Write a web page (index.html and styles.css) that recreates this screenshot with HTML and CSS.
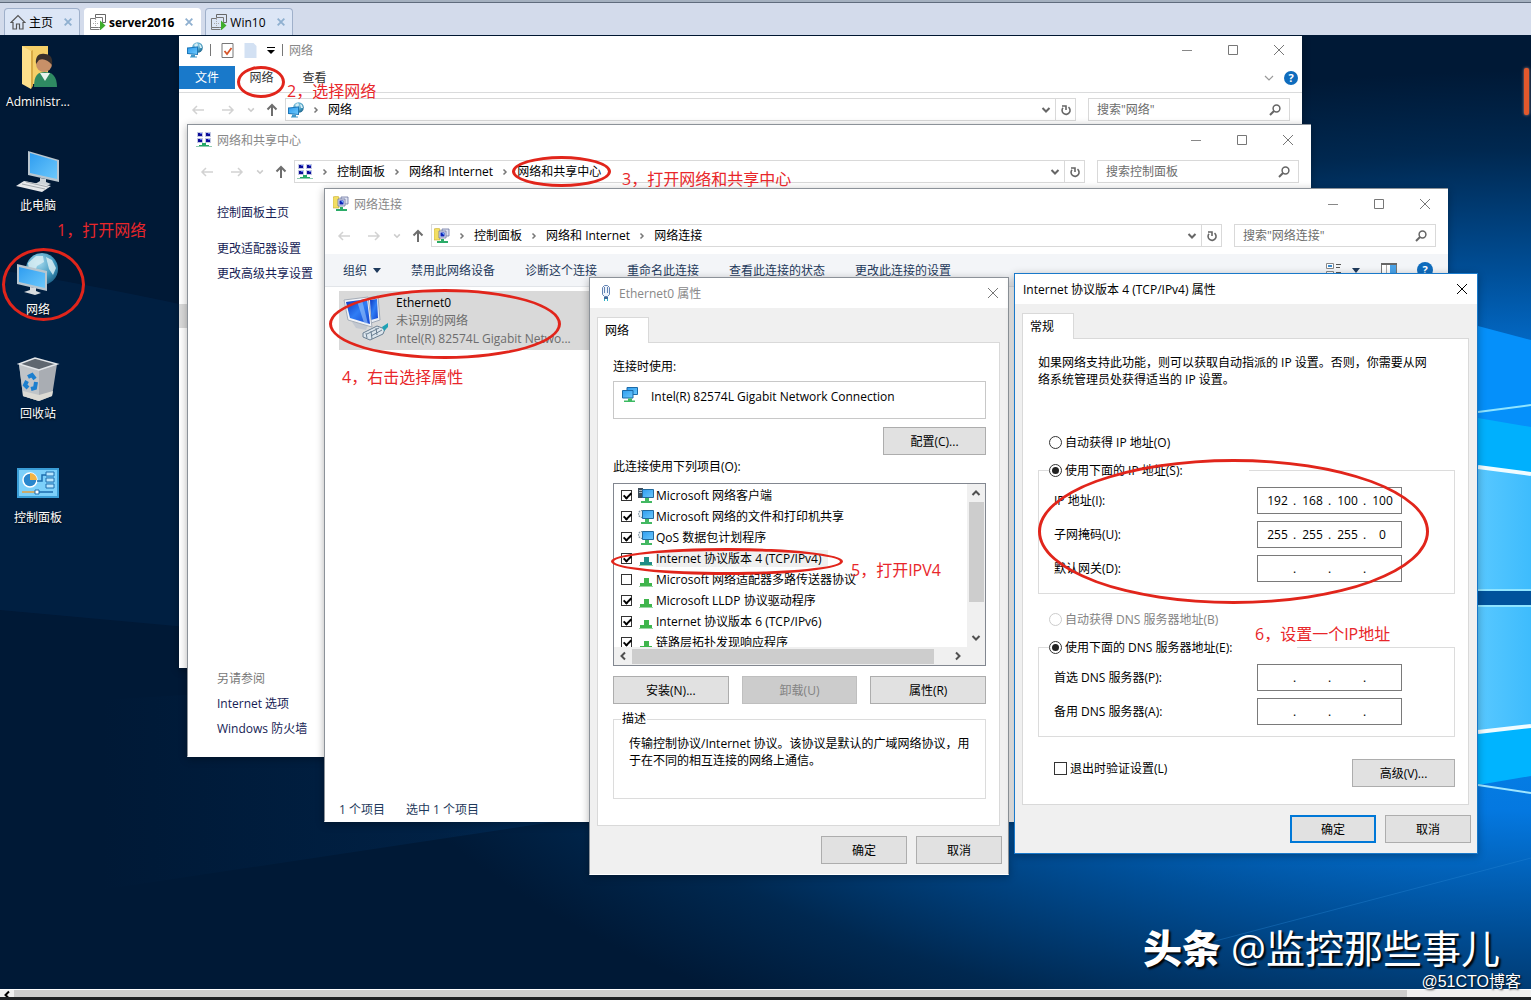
FILE: index.html
```
<!DOCTYPE html>
<html lang="zh-CN">
<head>
<meta charset="utf-8">
<title>server2016</title>
<link rel="stylesheet" href="styles.css">
</head>
<body>

<!-- shared icons -->
<svg class="defs" aria-hidden="true">
  <defs>
    <linearGradient id="screen" x1="0" y1="0" x2="1" y2="1">
      <stop offset="0" stop-color="#2f9df0"/><stop offset="1" stop-color="#6cc8fb"/>
    </linearGradient>
    <linearGradient id="deep" x1="0" y1="0" x2="1" y2="1">
      <stop offset="0" stop-color="#0a35c0"/><stop offset=".5" stop-color="#2f7df5"/><stop offset="1" stop-color="#1546d0"/>
    </linearGradient>
    <radialGradient id="globe" cx=".4" cy=".3" r=".8">
      <stop offset="0" stop-color="#a8dcf0"/><stop offset=".6" stop-color="#3f96bd"/><stop offset="1" stop-color="#17587e"/>
    </radialGradient>
  </defs>
  <symbol id="i-net" viewBox="0 0 16 16">
    <circle cx="10.500" cy="5.500" r="5.300" fill="url(#globe)"/>
    <path d="M7 3l3-2 1 2-2 2zM12 2l2 1 1 3-2 0z" fill="#d5eef6"/>
    <path d="M0 5.500L11 4.500V13L0 12z" fill="#1d77b8"/>
    <path d="M1 6.500L10 5.500V12L1 11z" fill="url(#screen)"/>
    <path d="M4 12.500h4v2h2v1H3v-1h1z" fill="#3f97c8"/>
  </symbol>
  <symbol id="i-center" viewBox="0 0 16 16">
    <path d="M1 0h6v5H1zM9 0h6v5H9zM1 6h6v5H1zM9 6h6v5H9z" fill="#c3c8e2"/>
    <path d="M2 1h4v3H2zM10 1h4v3h-4zM2 7h4v3H2zM10 7h4v3h-4z" fill="#0c0c98"/>
    <path d="M4 1h2v1H4zM12 1h2v1h-2zM4 7h2v1H4zM12 7h2v1h-2z" fill="#5a74e8"/>
    <path d="M6 11h4v2h3v2H3v-2h3z" fill="#22a866"/>
    <path d="M0 14h16v1H0z" fill="#8fcab0"/>
  </symbol>
  <symbol id="i-conn" viewBox="0 0 16 16">
    <path d="M0 1l4-1 2 1v11H0z" fill="#f2de62" stroke="#c4a93a" stroke-width=".6"/>
    <path d="M8 1h7v7H8z" fill="#dfe3f2" stroke="#6b74a0" stroke-width=".8"/>
    <path d="M5 3h7v7H5z" fill="#dfe3f2" stroke="#6b74a0" stroke-width=".8"/>
    <path d="M6.500 4.500h4v4h-4z" fill="#0b22b8"/><path d="M8 5h2v2z" fill="#6fb6ff"/>
    <path d="M7 11h3v2h4v2H3v-2h4z" fill="#2bab68"/>
  </symbol>
  <symbol id="i-adapter" viewBox="0 0 16 16">
    <path d="M5 .5h10.500v7H5z" fill="url(#screen)" stroke="#1b6aa8"/>
    <path d="M.5 3.500h10.500v7.500H.5z" fill="url(#screen)" stroke="#1b6aa8"/>
    <path d="M6 11.500h4v2h3v1.500H2v-1.500h4z" fill="#3cba62"/>
  </symbol>
  <symbol id="i-client" viewBox="0 0 16 16">
    <path d="M0 0h5v10H0z" fill="#3c4c5a"/><path d="M1 2h3v1H1zM1 4h3v1H1z" fill="#a8bac8"/>
    <path d="M4.500 1.500h11v8h-11z" fill="url(#screen)" stroke="#246a9c"/>
    <path d="M7 10h4v3h3v2H3v-2h4z" fill="#43b862"/>
  </symbol>
  <symbol id="i-service" viewBox="0 0 16 16">
    <circle cx="4" cy="5" r="3.500" fill="#e6edf2" stroke="#8296a4" stroke-width="1.200" stroke-dasharray="1.500 1"/>
    <path d="M4.500 1.500h11v8h-11z" fill="url(#screen)" stroke="#246a9c"/>
    <path d="M7 10h4v3h3v2H3v-2h4z" fill="#43b862"/>
  </symbol>
  <symbol id="i-proto" viewBox="0 0 16 16">
    <path d="M6 6h5v5h3v3H2v-3h4z" fill="currentColor"/><path d="M1 14h14v1H1z" fill="#9ad6a4"/>
  </symbol>
  <symbol id="i-plug" viewBox="0 0 12 18">
    <path d="M2.500 3.500l2-2h3l2 2v7l-2 2h-3l-2-2z" fill="#eef3fa" stroke="#6484b4"/>
    <path d="M4.500 3v6M7.500 3v6" stroke="#6484b4"/><path d="M4 13h4v2H4z" fill="#3f6a9a"/><path d="M4 15h1v2H4zM7 15h1v2H7z" fill="#2fb5c8"/>
  </symbol>
  <symbol id="i-vm" viewBox="0 0 16 16">
    <path d="M5.500 3.500v-3h10v8h-3" fill="none" stroke="#666"/>
    <path d="M.5 4.500h5v-1h7v10h-4M.5 4.500v9h8M.5 13.500v2h9" fill="none" stroke="#777"/>
    <path d="M3 9.500h5M5.500 5v8" stroke="#aaa" stroke-dasharray="1 1" fill="none"/>
    <path d="M10 6.500l5.500 5-5.500 5z" fill="#3fae2c"/>
  </symbol>
  <symbol id="i-home" viewBox="0 0 16 16">
    <path d="M1 8.500L8 1.500l7 7h-2v6.500H9.500v-5h-3v5H3V8.500z" fill="none" stroke="#555" stroke-width="1.200"/>
  </symbol>
  <symbol id="i-x" viewBox="0 0 12 12"><path d="M1 1l10 10M11 1L1 11" stroke="currentColor" fill="none"/></symbol>
  <symbol id="i-xb" viewBox="0 0 12 12"><path d="M2 2l8 8M10 2l-8 8" stroke="currentColor" stroke-width="2.200" fill="none"/></symbol>
  <symbol id="i-back" viewBox="0 0 14 12"><path d="M13 6H2M6 2L2 6l4 4" stroke="#d2d2d2" stroke-width="1.500" fill="none"/></symbol>
  <symbol id="i-fwd" viewBox="0 0 14 12"><path d="M1 6h11M8 2l4 4-4 4" stroke="#d2d2d2" stroke-width="1.500" fill="none"/></symbol>
  <symbol id="i-up" viewBox="0 0 12 14"><path d="M6 13V2M1.500 6.500L6 2l4.500 4.500" stroke="#6e6e6e" stroke-width="2" fill="none"/></symbol>
  <symbol id="i-down" viewBox="0 0 10 10"><path d="M1.500 3L5 6.500 8.500 3" stroke="currentColor" stroke-width="2" fill="none"/></symbol>
  <symbol id="i-thin" viewBox="0 0 10 10"><path d="M1 3l4 4 4-4" stroke="currentColor" stroke-width="1.200" fill="none"/></symbol>
  <symbol id="i-right" viewBox="0 0 6 8"><path d="M1.500 1.500L4 4 1.500 6.500" stroke="#777" stroke-width="1.500" fill="none"/></symbol>
  <symbol id="i-refresh" viewBox="0 0 12 12"><path d="M8.500 3.200a4 4 0 1 1-5.500 .6M2 2h4v4" stroke="#666" stroke-width="1.600" fill="none"/></symbol>
  <symbol id="i-search" viewBox="0 0 12 12"><circle cx="7.500" cy="4.500" r="3.400" stroke="#666" stroke-width="1.500" fill="none"/><path d="M5 7L1 11" stroke="#666" stroke-width="2"/></symbol>
  <symbol id="i-min" viewBox="0 0 12 12"><path d="M1 6.500h10" stroke="#888"/></symbol>
  <symbol id="i-max" viewBox="0 0 12 12"><path d="M1.500 1.500h9v9h-9z" stroke="#777" fill="none"/></symbol>
  <symbol id="i-tri" viewBox="0 0 8 5"><path d="M0 0h8L4 5z" fill="currentColor"/></symbol>
</svg>

<header class="vm-tabs">
  <div class="vm-tab"><svg class="ic16"><use href="#i-home"/></svg><span>主页</span><button class="tab-x" aria-label="关闭主页"><svg><use href="#i-xb"/></svg></button></div>
  <div class="vm-tab active"><svg class="ic16"><use href="#i-vm"/></svg><span>server2016</span><button class="tab-x" aria-label="关闭server2016"><svg><use href="#i-xb"/></svg></button></div>
  <div class="vm-tab"><svg class="ic16"><use href="#i-vm"/></svg><span>Win10</span><button class="tab-x" aria-label="关闭Win10"><svg><use href="#i-xb"/></svg></button></div>
</header>

<main class="desktop">
  <svg class="wallpaper" viewBox="0 35 1531 954" preserveAspectRatio="none" aria-hidden="true">
    <defs>
      <radialGradient id="bg" gradientUnits="userSpaceOnUse" cx="0" cy="0" r="1" gradientTransform="translate(1560 600) scale(1250 530)">
        <stop offset="0" stop-color="#0a90f5"/><stop offset=".4" stop-color="#0478e0"/><stop offset=".62" stop-color="#004f98"/><stop offset=".85" stop-color="#002850"/><stop offset="1" stop-color="#001936"/>
      </radialGradient>
      <linearGradient id="ray" x1="0" y1="0" x2="1" y2="0">
        <stop offset="0" stop-color="#004080" stop-opacity="0"/><stop offset="1" stop-color="#0a5aa8" stop-opacity=".5"/>
      </linearGradient>
      <linearGradient id="pane" x1="0" y1="0" x2="1" y2="0">
        <stop offset="0" stop-color="#58c8ff"/><stop offset="1" stop-color="#3ebcfd"/>
      </linearGradient>
    </defs>
    <path d="M0 35h1531v954H0z" fill="url(#bg)"/>
    <path d="M0 270Q180 300 330 340V640L0 610z" fill="#00305e" opacity=".3"/>
    <path d="M100 890L1100 740V640L100 700z" fill="url(#ray)"/>
    <path d="M1478 326l53 14v66l-53 6z" fill="#0590fa"/>
    <path d="M1478 412l53-6v68l-53-7z" fill="#00b0fd"/>
    <path d="M1478 418l53 9v-21l-53 6z" fill="#0590fa"/>
    <path d="M1478 467l53 7v116h-53z" fill="url(#pane)"/>
    <path d="M1478 590h53v16h-53z" fill="#00529c"/>
    <path d="M1478 606h53v120l-53 6z" fill="url(#pane)"/>
    <path d="M1478 732l53-6v50l-53 9z" fill="#00b4ff"/>
    <path d="M1478 412l53-7" stroke="#8fe4ff" stroke-width="2"/>
    <path d="M1478 467l53 7M1478 732l53-6" stroke="#f0fcff" stroke-width="4"/>
    <path d="M1478 590h53M1478 606h53" stroke="#8fe4ff" stroke-width="2"/>
    <path d="M1478 785l53 8" stroke="#9fe6ff" stroke-width="2"/>
    <path d="M1200 945L1531 858" stroke="#2a8ad8" opacity=".35"/>
  </svg>
  <span class="side-mark"></span>

  <nav class="shortcuts">
    <a href="#">
      <svg width="44" height="44" viewBox="0 0 44 44">
        <path d="M6 1h26v38H6z" fill="#f5cf68"/><path d="M6 1l9 5v38l-9-5z" fill="#fde08c"/><path d="M15 6l2-1v36l-2 3z" fill="#d9aa45"/>
        <path d="M18 42c0-12 4-15 11-15s12 4 12 15z" fill="#2f8a62"/><path d="M24 28l5 8 5-8z" fill="#e8f2ee"/>
        <circle cx="28" cy="19" r="8" fill="#c89068"/><path d="M20 19c-1-9 4-11 9-10 6 0 8 5 7 11-4-5-9-7-13-5z" fill="#3a302c"/>
      </svg>
      <span>Administr...</span>
    </a>
    <a href="#">
      <svg width="44" height="44" viewBox="0 0 44 44">
        <path d="M12 2l31 9v22l-31-7z" fill="#b9c6cf"/><path d="M14 4l27 8v18l-27-6z" fill="url(#screen)"/>
        <path d="M24 29l6 1v3l5 2-7 3-9-3 5-3z" fill="#cfd5d9"/><path d="M8 32l27 5-9 6L0 37z" fill="#e6e8ea"/><path d="M6 35l23 5M10 33l22 5" stroke="#a4aaae"/>
      </svg>
      <span>此电脑</span>
    </a>
    <a href="#">
      <svg width="44" height="44" viewBox="0 0 44 44">
        <circle cx="26" cy="16" r="16" fill="url(#globe)"/><path d="M12 10l8-7 7 0 1 6-7 4-2 6-6-1zM30 4l6 3 4 8-3 7-4-6z" fill="#d8edf3" opacity=".85"/>
        <path d="M1 11l30 7v20L1 31z" fill="#b9c6cf"/><path d="M3 14l26 6v15L3 29z" fill="url(#screen)"/>
        <path d="M14 34l6 1v3l5 2-6 2-11-3 6-2z" fill="#d8dcdf"/>
      </svg>
      <span>网络</span>
    </a>
    <a href="#">
      <svg width="44" height="44" viewBox="0 0 44 44">
        <path d="M3 7l20 6 18-6-5 32-13 5-16-5z" fill="#a9adb3"/><path d="M3 7l20 6v31l-16-5z" fill="#c0c4c8"/>
        <path d="M3 7l16-6 22 6-18 6z" fill="#5f6770" stroke="#e4e7ea" stroke-width="1.500"/><path d="M7 34l16 4 14-4-1 5-13 5-16-5z" fill="#dcdad4"/>
        <path d="M12 20l4-2 3 4M20 25l-1 6-4 1M12 31l-3-3 2-4" stroke="#1b7fcf" stroke-width="4" fill="none"/>
      </svg>
      <span>回收站</span>
    </a>
    <a href="#">
      <svg width="44" height="44" viewBox="0 0 44 44">
        <path d="M1 7h42v30H1z" fill="#3a9dd6"/><path d="M3 9h38v26H3z" fill="#7dd0fa"/>
        <circle cx="14" cy="19" r="7" fill="#2a86cc" stroke="#fff" stroke-width="1.500"/><path d="M14 19v-7a7 7 0 0 1 7 7z" fill="#f3b445"/>
        <path d="M21 20h5v-6h4" stroke="#1c6cae" fill="none" stroke-width="1.500"/>
        <path d="M30 11h8v4h-8zM30 17h8v4h-8zM30 23h8v4h-8z" fill="#b8e5fc" stroke="#1c6cae"/>
        <path d="M6 31h14" stroke="#e5a040" stroke-width="1.500"/><path d="M20 31h17" stroke="#1c6cae" stroke-width="1.500"/><path d="M19 29h4v4h-4z" fill="#fff" stroke="#1c6cae"/>
      </svg>
      <span>控制面板</span>
    </a>
  </nav>

  <!-- network explorer -->
  <section class="window explorer">
    <div class="titlebar">
      <svg class="ic16"><use href="#i-net"/></svg>
      <i class="sep"></i>
      <svg class="qa" viewBox="0 0 12 15"><path d="M.5 .5h11v14H.5z" fill="#fff" stroke="#777"/><path d="M3 8l2.500 3L10 5" stroke="#d6562a" stroke-width="1.800" fill="none"/></svg>
      <svg class="qa" viewBox="0 0 12 15"><path d="M0 0h9l3 3v12H0z" fill="#d3e1f3"/></svg>
      <svg class="qa-more" viewBox="0 0 8 7"><path d="M0 0h8v1H0zM0 3h8L4 7z"/></svg>
      <i class="sep"></i>
      <h1>网络</h1>
      <div class="controls">
        <button aria-label="最小化"><svg><use href="#i-min"/></svg></button>
        <button aria-label="最大化"><svg><use href="#i-max"/></svg></button>
        <button aria-label="关闭"><svg><use href="#i-x"/></svg></button>
      </div>
    </div>
    <div class="ribbon">
      <button class="file">文件</button>
      <button>网络</button>
      <button>查看</button>
      <svg class="ribbon-arrow"><use href="#i-thin"/></svg>
      <button class="help" aria-label="帮助">?</button>
    </div>
    <div class="nav">
      <svg class="arrow"><use href="#i-back"/></svg><svg class="arrow"><use href="#i-fwd"/></svg><svg class="recent"><use href="#i-down"/></svg><svg class="up"><use href="#i-up"/></svg>
      <div class="address">
        <svg class="ic16"><use href="#i-net"/></svg>
        <svg class="crumb"><use href="#i-right"/></svg><a href="#">网络</a>
        <svg class="drop"><use href="#i-down"/></svg>
        <button class="refresh" aria-label="刷新"><svg><use href="#i-refresh"/></svg></button>
      </div>
      <label class="search"><input type="text" aria-label="搜索" placeholder="搜索&quot;网络&quot;"><svg><use href="#i-search"/></svg></label>
    </div>
    <div class="tree"><span class="tree-selected"></span></div>
  </section>

  <!-- network and sharing center -->
  <section class="window sharing">
    <div class="titlebar">
      <svg class="ic16"><use href="#i-center"/></svg>
      <h1>网络和共享中心</h1>
      <div class="controls">
        <button aria-label="最小化"><svg><use href="#i-min"/></svg></button>
        <button aria-label="最大化"><svg><use href="#i-max"/></svg></button>
        <button aria-label="关闭"><svg><use href="#i-x"/></svg></button>
      </div>
    </div>
    <div class="nav">
      <svg class="arrow"><use href="#i-back"/></svg><svg class="arrow"><use href="#i-fwd"/></svg><svg class="recent"><use href="#i-down"/></svg><svg class="up"><use href="#i-up"/></svg>
      <div class="address">
        <svg class="ic16"><use href="#i-center"/></svg>
        <svg class="crumb"><use href="#i-right"/></svg><a href="#">控制面板</a>
        <svg class="crumb"><use href="#i-right"/></svg><a href="#">网络和 Internet</a>
        <svg class="crumb"><use href="#i-right"/></svg><a href="#">网络和共享中心</a>
        <svg class="drop"><use href="#i-down"/></svg>
        <button class="refresh" aria-label="刷新"><svg><use href="#i-refresh"/></svg></button>
      </div>
      <label class="search"><input type="text" aria-label="搜索" placeholder="搜索控制面板"><svg><use href="#i-search"/></svg></label>
    </div>
    <nav class="side">
      <a href="#" class="side-home">控制面板主页</a>
      <a href="#">更改适配器设置</a>
      <a href="#">更改高级共享设置</a>
      <span class="see-also">另请参阅</span>
      <a href="#">Internet 选项</a>
      <a href="#">Windows 防火墙</a>
    </nav>
  </section>

  <!-- network connections -->
  <section class="window connections">
    <div class="titlebar">
      <svg class="ic16"><use href="#i-conn"/></svg>
      <h1>网络连接</h1>
      <div class="controls">
        <button aria-label="最小化"><svg><use href="#i-min"/></svg></button>
        <button aria-label="最大化"><svg><use href="#i-max"/></svg></button>
        <button aria-label="关闭"><svg><use href="#i-x"/></svg></button>
      </div>
    </div>
    <div class="nav">
      <svg class="arrow"><use href="#i-back"/></svg><svg class="arrow"><use href="#i-fwd"/></svg><svg class="recent"><use href="#i-down"/></svg><svg class="up"><use href="#i-up"/></svg>
      <div class="address">
        <svg class="ic16"><use href="#i-conn"/></svg>
        <svg class="crumb"><use href="#i-right"/></svg><a href="#">控制面板</a>
        <svg class="crumb"><use href="#i-right"/></svg><a href="#">网络和 Internet</a>
        <svg class="crumb"><use href="#i-right"/></svg><a href="#">网络连接</a>
        <svg class="drop"><use href="#i-down"/></svg>
        <button class="refresh" aria-label="刷新"><svg><use href="#i-refresh"/></svg></button>
      </div>
      <label class="search"><input type="text" aria-label="搜索" placeholder="搜索&quot;网络连接&quot;"><svg><use href="#i-search"/></svg></label>
    </div>
    <div class="toolbar">
      <button>组织 <svg class="tri"><use href="#i-tri"/></svg></button>
      <button>禁用此网络设备</button>
      <button>诊断这个连接</button>
      <button>重命名此连接</button>
      <button>查看此连接的状态</button>
      <button>更改此连接的设置</button>
      <span class="views">
        <svg class="view-list" viewBox="0 0 16 14"><path d="M.5 .5h7v5h-7zM.5 8.500h7v5h-7z" fill="#fff" stroke="#888"/><path d="M2 2h4v2H2z" fill="#3a8ad0"/><path d="M2 10h4v2H2z" fill="#c07850"/><path d="M10 1.500h5M10 4.500h4M10 9.500h5M10 12.500h4" stroke="#555"/></svg>
        <svg class="tri"><use href="#i-tri"/></svg>
        <svg class="view-pane" viewBox="0 0 16 14"><path d="M.5 .5h15v13H.5z" fill="#fff" stroke="#777"/><path d="M0 0h16v2H0z" fill="#666"/><path d="M9 2h6v11H9z" fill="#4aa3e8"/><path d="M5.500 2v11" stroke="#aaa"/></svg>
        <button class="help" aria-label="帮助">?</button>
      </span>
    </div>
    <div class="conn-list">
      <div class="conn">
        <svg width="48" height="48" viewBox="0 0 48 48">
          <path d="M24 4l11-2 2 24-12 4z" fill="#e9eef5" stroke="#a0a9b6"/><path d="M27 6l7-1 1 19-7 2z" fill="url(#deep)"/>
          <path d="M9 28l5-3 11 6-2 5-10-2z" fill="#c3c8d0"/>
          <path d="M1 6l24-3 4 30L5 26z" fill="#f2f4f8" stroke="#a5adb8"/><path d="M3 8l21-3 3 25L7 24z" fill="url(#deep)"/>
          <path d="M14 7l5-1 6 24-4-1z" fill="#9cc6fb" opacity=".6"/>
          <path d="M20 39l14-7 8 3-2 5-13 6-7-3z" fill="#dce5ec" stroke="#6a7f92"/><path d="M24 40l12-6M28 42l11-6M23 39l1 5M28 37l1 8M33 34l1 7" stroke="#6a7f92"/><path d="M39 33l6-4v4l-4 4z" fill="#1fa2b4"/>
        </svg>
        <div>
          <p class="conn-name">Ethernet0</p>
          <p>未识别的网络</p>
          <p>Intel(R) 82574L Gigabit Netwo...</p>
        </div>
      </div>
    </div>
    <div class="status"><span>1 个项目</span><span>选中 1 个项目</span></div>
  </section>

  <!-- Ethernet0 properties -->
  <section class="window dialog eth">
    <div class="titlebar">
      <svg class="plug"><use href="#i-plug"/></svg>
      <h1>Ethernet0 属性</h1>
      <button class="close" aria-label="关闭"><svg><use href="#i-x"/></svg></button>
    </div>
    <div class="dialog-body">
      <button class="tab">网络</button>
      <div class="panel">
        <p class="label">连接时使用:</p>
        <div class="adapter"><svg class="ic16"><use href="#i-adapter"/></svg><span>Intel(R) 82574L Gigabit Network Connection</span></div>
        <button class="btn config">配置(C)...</button>
        <p class="label">此连接使用下列项目(O):</p>
        <div class="listbox">
          <ul>
            <li><label><input type="checkbox" checked><svg class="ic16"><use href="#i-client"/></svg><span>Microsoft 网络客户端</span></label></li>
            <li><label><input type="checkbox" checked><svg class="ic16"><use href="#i-service"/></svg><span>Microsoft 网络的文件和打印机共享</span></label></li>
            <li><label><input type="checkbox" checked><svg class="ic16"><use href="#i-service"/></svg><span>QoS 数据包计划程序</span></label></li>
            <li class="selected"><label><input type="checkbox" checked><svg class="ic16"><use href="#i-proto"/></svg><span>Internet 协议版本 4 (TCP/IPv4)</span></label></li>
            <li><label><input type="checkbox"><svg class="ic16"><use href="#i-proto"/></svg><span>Microsoft 网络适配器多路传送器协议</span></label></li>
            <li><label><input type="checkbox" checked><svg class="ic16"><use href="#i-proto"/></svg><span>Microsoft LLDP 协议驱动程序</span></label></li>
            <li><label><input type="checkbox" checked><svg class="ic16"><use href="#i-proto"/></svg><span>Internet 协议版本 6 (TCP/IPv6)</span></label></li>
            <li><label><input type="checkbox" checked><svg class="ic16"><use href="#i-proto"/></svg><span>链路层拓扑发现响应程序</span></label></li>
          </ul>
          <div class="vbar"><svg class="flip"><use href="#i-down"/></svg><i></i><svg><use href="#i-down"/></svg></div>
          <div class="hbar"><svg class="left"><use href="#i-down"/></svg><i></i><svg class="right"><use href="#i-down"/></svg></div>
          <div class="corner"></div>
        </div>
        <div class="btn-row">
          <button class="btn">安装(N)...</button>
          <button class="btn" disabled>卸载(U)</button>
          <button class="btn">属性(R)</button>
        </div>
        <fieldset class="desc">
          <legend>描述</legend>
          <p>传输控制协议/Internet 协议。该协议是默认的广域网络协议，用于在不同的相互连接的网络上通信。</p>
        </fieldset>
      </div>
      <div class="footer"><button class="btn">确定</button><button class="btn">取消</button></div>
    </div>
  </section>

  <!-- IPv4 properties -->
  <section class="window dialog ipv4">
    <div class="titlebar">
      <h1>Internet 协议版本 4 (TCP/IPv4) 属性</h1>
      <button class="close" aria-label="关闭"><svg><use href="#i-x"/></svg></button>
    </div>
    <div class="dialog-body">
      <button class="tab">常规</button>
      <div class="panel">
        <p class="intro">如果网络支持此功能，则可以获取自动指派的 IP 设置。否则，你需要从网络系统管理员处获得适当的 IP 设置。</p>
        <label class="radio"><input type="radio" name="ip">自动获得 IP 地址(O)</label>
        <fieldset class="group">
          <legend><label class="radio"><input type="radio" name="ip" checked>使用下面的 IP 地址(S):</label></legend>
          <div class="row"><span>IP 地址(I):</span><div class="ip"><input value="192" aria-label="IP 地址 1"><b>.</b><input value="168" aria-label="IP 地址 2"><b>.</b><input value="100" aria-label="IP 地址 3"><b>.</b><input value="100" aria-label="IP 地址 4"></div></div>
          <div class="row"><span>子网掩码(U):</span><div class="ip"><input value="255" aria-label="子网掩码 1"><b>.</b><input value="255" aria-label="子网掩码 2"><b>.</b><input value="255" aria-label="子网掩码 3"><b>.</b><input value="0" aria-label="子网掩码 4"></div></div>
          <div class="row"><span>默认网关(D):</span><div class="ip"><input aria-label="默认网关 1"><b>.</b><input aria-label="默认网关 2"><b>.</b><input aria-label="默认网关 3"><b>.</b><input aria-label="默认网关 4"></div></div>
        </fieldset>
        <label class="radio off"><input type="radio" name="dns" disabled>自动获得 DNS 服务器地址(B)</label>
        <fieldset class="group">
          <legend class="wide"><label class="radio"><input type="radio" name="dns" checked>使用下面的 DNS 服务器地址(E):</label></legend>
          <div class="row"><span>首选 DNS 服务器(P):</span><div class="ip"><input aria-label="首选 DNS 1"><b>.</b><input aria-label="首选 DNS 2"><b>.</b><input aria-label="首选 DNS 3"><b>.</b><input aria-label="首选 DNS 4"></div></div>
          <div class="row"><span>备用 DNS 服务器(A):</span><div class="ip"><input aria-label="备用 DNS 1"><b>.</b><input aria-label="备用 DNS 2"><b>.</b><input aria-label="备用 DNS 3"><b>.</b><input aria-label="备用 DNS 4"></div></div>
        </fieldset>
        <div class="last">
          <label class="radio"><input type="checkbox">退出时验证设置(L)</label>
          <button class="btn config">高级(V)...</button>
        </div>
      </div>
      <div class="footer"><button class="btn primary">确定</button><button class="btn">取消</button></div>
    </div>
  </section>

  <!-- step markers -->
  <span class="ring r1"></span><p class="note n1">1，打开网络</p>
  <span class="ring r2"></span><p class="note n2">2，选择网络</p>
  <span class="ring r3"></span><p class="note n3">3，打开网络和共享中心</p>
  <span class="ring r4"></span><p class="note n4">4，右击选择属性</p>
  <span class="ring r5"></span><p class="note n5">5，打开IPV4</p>
  <span class="ring r6"></span><p class="note n6">6，设置一个IP地址</p>

  <p class="watermark"><b>头条</b> @监控那些事儿</p>
</main>

<footer class="hscroll"><svg><use href="#i-down"/></svg><i></i></footer>
<p class="credit">@51CTO博客</p>

</body>
</html>
```

FILE: styles.css
```
* {
  box-sizing: border-box;
}

body {
  margin: 0;
  height: 100vh;
  display: flex;
  flex-direction: column;
  overflow: hidden;
  position: relative;
  background: #1e2124;
  font-family: "Open Sans", "Noto Sans CJK SC", sans-serif;
  font-size: 12px;
  line-height: 17px;
  color: #000;
}

button, input {
  font: inherit;
  color: inherit;
  margin: 0;
}

button {
  border: 0;
  background: none;
  padding: 0;
}

a {
  color: inherit;
  text-decoration: none;
}

p, h1, ul {
  margin: 0;
  padding: 0;
}

svg {
  flex: none;
  display: block;
}

.defs {
  position: absolute;
  width: 0;
  height: 0;
}

.ic16 {
  width: 16px;
  height: 16px;
}

/* tabs on top */
.vm-tabs {
  flex: none;
  height: 35px;
  padding: 5px 4px 0;
  display: flex;
  align-items: flex-end;
  gap: 4px;
  background: #d3dbeb;
  border-top: 2px solid #a4b0bf;
  box-shadow: inset 0 1px #5f6b7c;
}

.vm-tab {
  height: 27px;
  padding: 0 6px 0 5px;
  display: flex;
  align-items: center;
  gap: 3px;
  background: #dce6f6;
  border: 1px solid #9fb0ca;
  border-bottom: 0;
  border-radius: 4px 4px 0 0;
}

.vm-tab.active {
  background: #fff;
  border-color: #fff;
  font-weight: bold;
}

.tab-x {
  margin-left: 7px;
  color: #8fb0d0;
}

.tab-x svg {
  width: 10px;
  height: 10px;
}

/* desktop */
.desktop {
  flex: 1;
  min-height: 0;
  position: relative;
  overflow: hidden;
  background: #00193a;
}

.wallpaper {
  position: absolute;
  inset: 0;
  width: 100%;
  height: 100%;
}

.side-mark {
  position: absolute;
  right: 2px;
  top: 33px;
  width: 5px;
  height: 47px;
  border-radius: 2px;
  background: #e2582c;
  box-shadow: 0 0 3px #c09080;
}

.shortcuts {
  position: relative;
  width: 76px;
  padding-top: 1px;
}

.shortcuts a {
  height: 104px;
  padding-top: 9px;
  display: flex;
  flex-direction: column;
  align-items: center;
  gap: 4px;
  color: #fff;
  text-shadow: 0 1px 2px #000;
}

/* windows */
.window {
  position: absolute;
  background: #fff;
  border: 1px solid #8c9299;
  border-right-width: 0;
  border-bottom-color: #fff;
  box-shadow: 0 2px 8px rgba(0, 0, 0, .3);
  display: flex;
  flex-direction: column;
}

.explorer {
  left: 179px;
  top: 1px;
  width: 1123px;
  height: 632px;
  border-width: 0;
}

.sharing {
  left: 187px;
  top: 89px;
  width: 1124px;
  height: 633px;
}

.connections {
  left: 324px;
  top: 153px;
  width: 1124px;
  height: 634px;
}

.titlebar {
  flex: none;
  height: 30px;
  padding-left: 8px;
  display: flex;
  align-items: center;
  gap: 5px;
}

.explorer .titlebar {
  height: 28px;
  gap: 10px;
}

.titlebar h1 {
  font-size: 12px;
  font-weight: normal;
  color: #888;
}

.explorer .titlebar h1 {
  margin-left: -4px;
}

.sep {
  width: 1px;
  height: 12px;
  background: #777;
  margin-left: -3px;
}

.qa {
  width: 13px;
  height: 15px;
}

.qa-more {
  width: 8px;
  height: 7px;
}

.controls {
  margin-left: auto;
  display: flex;
}

.controls button {
  width: 46px;
  height: 28px;
  display: grid;
  place-items: center;
  color: #777;
}

.controls svg, .close svg {
  width: 12px;
  height: 12px;
}

.ribbon {
  flex: none;
  height: 29px;
  padding: 2px 4px 3px 0;
  display: flex;
  align-items: center;
  border-bottom: 1px solid #dadbdc;
  color: #333;
}

.ribbon button {
  width: 53px;
  height: 23px;
}

.ribbon .file {
  width: 56px;
  background: #1979ca;
  color: #fff;
}

.ribbon-arrow {
  margin-left: auto;
  margin-right: 10px;
  width: 10px;
  height: 10px;
  color: #999;
}

.help, .ribbon .help {
  width: 14px;
  height: 14px;
  border-radius: 50%;
  background: #0f6cbd;
  color: #fff;
  font-weight: bold;
  font-size: 11px;
  line-height: 14px;
}

.nav {
  flex: none;
  height: 33px;
  padding: 0 12px;
  display: flex;
  align-items: center;
}

.nav .arrow {
  width: 14px;
  height: 12px;
  margin-right: 16px;
}

.nav .recent {
  width: 8px;
  height: 8px;
  margin-left: -4px;
  color: #ccc;
}

.nav .up {
  width: 12px;
  height: 14px;
  margin: 0 7px 0 11px;
}

.address {
  flex: 1;
  height: 23px;
  padding-left: 2px;
  display: flex;
  align-items: center;
  border: 1px solid #d9d9d9;
}

.crumb {
  width: 6px;
  height: 8px;
  margin: 0 9px;
}

.drop {
  width: 10px;
  height: 10px;
  margin-left: auto;
  margin-right: 4px;
  color: #666;
}

.refresh {
  width: 20px;
  height: 21px;
  display: grid;
  place-items: center;
  border-left: 1px solid #d9d9d9;
}

.refresh svg, .search svg {
  width: 12px;
  height: 12px;
}

.search {
  width: 202px;
  height: 23px;
  margin-left: 12px;
  padding: 0 8px;
  display: flex;
  align-items: center;
  border: 1px solid #d9d9d9;
}

.search input {
  flex: 1;
  min-width: 0;
  padding: 0;
  border: 0;
  outline: 0;
}

.search input::placeholder {
  color: #6d6d6d;
}

.tree {
  flex: 1;
  padding-top: 178px;
}

.tree-selected {
  display: block;
  width: 9px;
  height: 24px;
  background: #d9d9d9;
}

.side {
  flex: 1;
  padding: 16px 29px 19px;
  display: flex;
  flex-direction: column;
  align-items: flex-start;
  gap: 8px;
  color: #151c55;
}

.side-home {
  margin-bottom: 11px;
}

.see-also {
  margin-top: auto;
  color: #777;
}

.toolbar {
  flex: none;
  height: 33px;
  margin-top: 2px;
  padding: 0 15px 0 18px;
  display: flex;
  align-items: center;
  gap: 30px;
  background: #f3f5f8;
  border-bottom: 1px solid #e2e5e9;
  color: #1e395b;
}

.toolbar button {
  display: flex;
  align-items: center;
  gap: 6px;
}

.tri {
  width: 8px;
  height: 5px;
}

.views {
  margin-left: auto;
  display: flex;
  align-items: center;
  gap: 10px;
}

.view-list, .view-pane {
  width: 16px;
  height: 14px;
}

.view-pane {
  margin-left: 11px;
}

.toolbar .help {
  width: 16px;
  height: 16px;
  margin-left: 10px;
  justify-content: center;
}

.conn-list {
  flex: 1;
  padding: 4px 14px;
}

.conn {
  width: 260px;
  height: 59px;
  padding: 3px 4px;
  display: flex;
  gap: 5px;
  background: #d9d9d9;
  line-height: 18px;
  color: #6d6d6d;
}

.conn p {
  white-space: nowrap;
}

.conn .conn-name {
  color: #000;
}

.status {
  flex: none;
  height: 24px;
  padding-left: 14px;
  display: flex;
  align-items: center;
  gap: 21px;
  color: #1e395b;
}

/* dialogs */
.dialog .titlebar {
  padding-right: 9px;
  background: #fff;
}

.dialog-body {
  padding-top: 9px;
  background: #f0f0f0;
}

.eth {
  left: 589px;
  top: 242px;
  width: 420px;
  border-right-width: 1px;
}

.ipv4 {
  left: 1014px;
  top: 238px;
  width: 464px;
  border-color: #1979ca;
  border-right-width: 1px;
}

.ipv4 .titlebar h1 {
  color: #000;
}

.plug {
  width: 12px;
  height: 18px;
  margin-left: 2px;
  margin-right: 2px;
}

.close {
  margin-left: auto;
  color: #777;
}

.ipv4 .close {
  color: #000;
}

.tab {
  position: relative;
  display: block;
  width: 52px;
  height: 26px;
  margin-left: 7px;
  margin-bottom: -1px;
  padding-right: 12px;
  background: #fff;
  border: 1px solid #d9d9d9;
  border-bottom: 0;
}

.panel {
  margin: 0 8px 0 7px;
  padding: 15px 13px 26px 15px;
  background: #fff;
  border: 1px solid #d9d9d9;
}

.adapter {
  height: 38px;
  margin-top: 6px;
  margin-bottom: 8px;
  padding: 5px 8px;
  display: flex;
  gap: 13px;
  border: 1px solid #c8c8c8;
}

.adapter span {
  padding-top: 1px;
}

.btn {
  flex: 1;
  height: 28px;
  background: #e1e1e1;
  border: 1px solid #adadad;
}

.btn:disabled {
  background: #ccc;
  border-color: #bfbfbf;
  color: #838383;
}

.btn.primary {
  border: 2px solid #0078d7;
}

.config {
  display: block;
  flex: none;
  width: 103px;
  margin-left: auto;
}

.config + .label {
  margin-top: 3px;
  margin-bottom: 8px;
}

.listbox {
  height: 183px;
  display: grid;
  grid-template-columns: 1fr 18px;
  grid-template-rows: 1fr 18px;
  border: 1px solid #828790;
}

.listbox ul {
  min-height: 0;
  padding-top: 1px;
  overflow: hidden;
  list-style: none;
}

.listbox label {
  height: 21px;
  padding-left: 7px;
  display: flex;
  align-items: center;
  white-space: nowrap;
}

.listbox label svg {
  margin-left: 6px;
  margin-right: 2px;
  color: #3fb54c;
}

.selected span {
  background: #f0f0f0;
  padding-right: 6px;
}

.listbox .selected svg {
  color: #1f8d86;
}

input[type="checkbox"], input[type="radio"] {
  appearance: none;
  flex: none;
  position: relative;
  width: 13px;
  height: 13px;
  border: 1px solid #333;
  background: #fff;
}

.listbox input[type="checkbox"] {
  width: 11px;
  height: 11px;
}

.listbox input:checked::after {
  content: "";
  position: absolute;
  left: 3px;
  top: 0;
  width: 3px;
  height: 6px;
  border: solid #000;
  border-width: 0 2px 2px 0;
  transform: rotate(45deg);
}

input[type="radio"] {
  border-radius: 50%;
}

input[type="radio"]:checked::after {
  content: "";
  position: absolute;
  inset: 2px;
  border-radius: 50%;
  background: #222;
}

.vbar, .hbar {
  display: flex;
  align-items: center;
  background: #f0f0f0;
}

.vbar {
  flex-direction: column;
}

.corner {
  background: #f0f0f0;
}

.listbox .vbar svg, .listbox .hbar svg {
  width: 10px;
  height: 10px;
  margin: 4px;
  color: #505050;
}

.flip {
  transform: rotate(180deg);
}

.left {
  transform: rotate(90deg);
}

.right {
  transform: rotate(-90deg);
}

.vbar i {
  width: 15px;
  height: 100px;
  margin-bottom: auto;
  background: #cdcdcd;
}

.hbar i {
  flex: 1;
  height: 15px;
  margin-right: 15px;
  background: #cdcdcd;
}

.btn-row {
  margin-top: 10px;
  display: flex;
  gap: 13px;
}

.desc {
  margin: 6px 0 0;
  padding: 7px 13px 29px 15px;
  border: 1px solid #dcdcdc;
}

.desc legend {
  margin-left: -8px;
  line-height: 18px;
  padding: 0 1px;
}

.footer {
  padding: 10px 6px;
  display: flex;
  justify-content: flex-end;
  gap: 9px;
}

.footer .btn {
  flex: none;
  width: 86px;
}

/* ipv4 form */
.ipv4 .panel {
  padding-bottom: 17px;
}

.intro {
  width: 396px;
  margin-bottom: 45px;
}

.radio {
  height: 18px;
  display: flex;
  align-items: center;
  gap: 3px;
}

.panel > .radio {
  margin-left: 11px;
}

.off {
  margin-top: 16px;
  color: #838383;
}

.off input[type="radio"] {
  border-color: #ccc;
}

.group {
  margin: 10px 0 0;
  padding: 8px 0 11px;
  display: grid;
  gap: 7px;
  border: 1px solid #dcdcdc;
}

.group legend {
  width: 200px;
  margin-left: 10px;
  padding: 0;
}

.group legend.wide {
  width: 248px;
}

.row {
  padding: 0 52px 0 15px;
  display: flex;
  align-items: center;
  justify-content: space-between;
}

.ip {
  width: 145px;
  height: 27px;
  padding-left: 4px;
  display: flex;
  align-items: center;
  border: 1px solid #7a7a7a;
}

.ip input {
  width: 31px;
  padding: 0;
  border: 0;
  outline: 0;
  text-align: center;
}

.ip b {
  width: 4px;
  font-weight: normal;
}

.last {
  margin-top: 22px;
  padding-left: 16px;
  display: flex;
}

/* red step markers */
.ring {
  position: absolute;
  border: 3px solid #e1251b;
  border-radius: 50%;
  pointer-events: none;
}

.r1 { left: 2px; top: 213px; width: 83px; height: 73px; }
.r2 { left: 237px; top: 31px; width: 48px; height: 32px; }
.r3 { left: 512px; top: 121px; width: 99px; height: 31px; }
.r4 { left: 329px; top: 254px; width: 232px; height: 70px; }
.r5 { left: 611px; top: 513px; width: 232px; height: 27px; }
.r6 { left: 1038px; top: 424px; width: 391px; height: 145px; }

.note {
  position: absolute;
  font-size: 16px;
  line-height: 24px;
  color: #e8262a;
  white-space: nowrap;
}

.n1 { left: 57px; top: 183px; }
.n2 { left: 287px; top: 44px; }
.n3 { left: 622px; top: 132px; }
.n4 { left: 342px; top: 330px; }
.n5 { left: 851px; top: 523px; }
.n6 { left: 1255px; top: 587px; }

.watermark {
  position: absolute;
  right: 31px;
  bottom: 13px;
  font-size: 39px;
  line-height: 56px;
  color: #fff;
  text-shadow: 2px 2px 2px #000;
  white-space: nowrap;
}

.watermark b {
  font-weight: 900;
}

/* bottom scrollbar */
.hscroll {
  flex: none;
  height: 8px;
  margin-bottom: 3px;
  display: flex;
  overflow: hidden;
  background: #f0f0f0;
  border-top: 1px solid #fff;
}

.hscroll svg {
  width: 10px;
  height: 10px;
  margin: 0 2px;
  transform: rotate(90deg);
}

.hscroll i {
  width: 91%;
  background: #cdcdcd;
}

.credit {
  position: absolute;
  right: 10px;
  bottom: 6px;
  font-family: "Liberation Sans", "Noto Sans CJK SC", sans-serif;
  font-size: 16px;
  line-height: 24px;
  color: #fff;
  text-shadow: 1px 1px 2px #000;
}
```
